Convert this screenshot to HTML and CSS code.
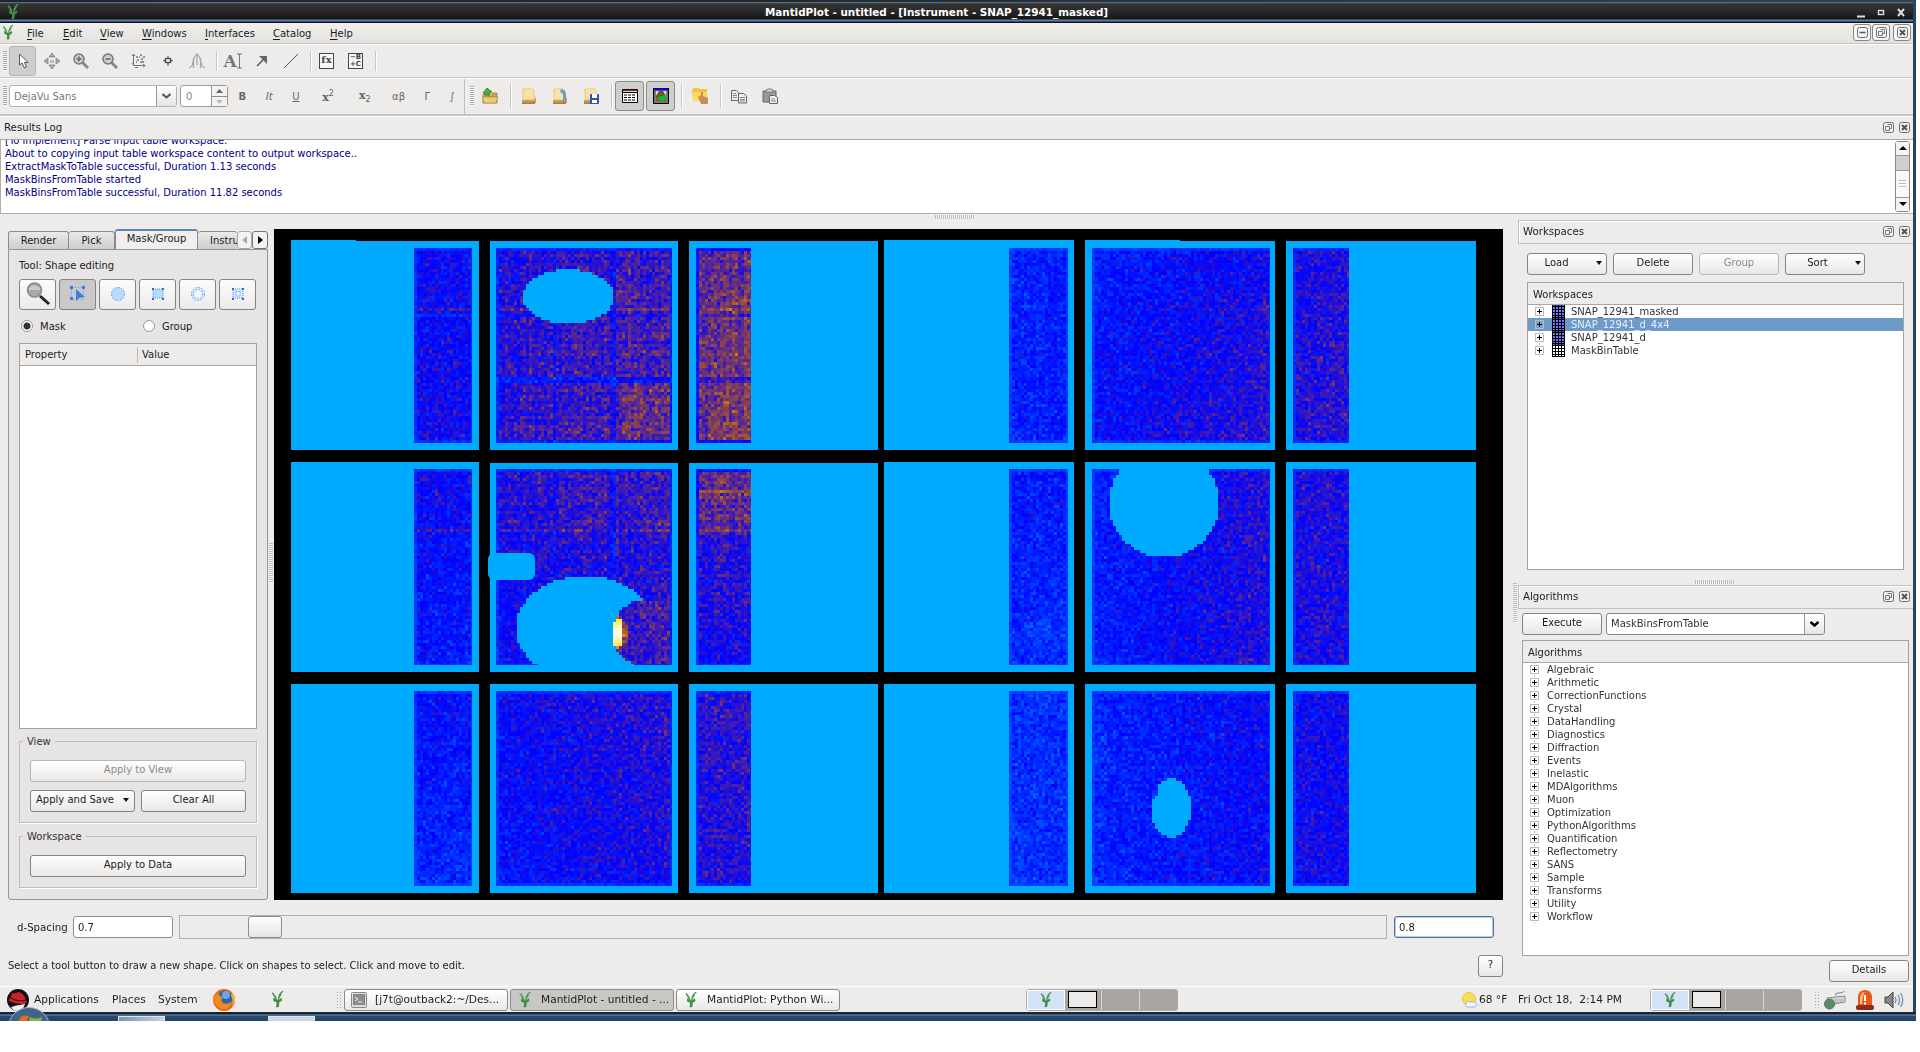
FILE: index.html
```html
<!DOCTYPE html>
<html lang="en">
<head>
<meta charset="utf-8">
<title>MantidPlot - untitled - [Instrument - SNAP_12941_masked]</title>
<link rel="stylesheet" href="styles.css">
</head>
<body>
<svg class="defs" width="0" height="0">
  <symbol id="mantid" viewBox="0 0 14 18"><path d="M1 2Q4 3 6 10M13 0Q8 3 8 10M3 4L5 8M11 3L8.500 7" fill="none" stroke="#4c9a55" stroke-width="1.600"/><path d="M2.500 7L6 9.500H8L11.500 7L12 10L9 12L8.500 17L5.500 17.500L6 12L2.500 10.500Z" fill="#3f8d4a"/></symbol>
  <symbol id="float" viewBox="0 0 11 11"><rect x=".5" y=".5" width="10" height="10" rx="2" fill="#f4f3f2" stroke="#6d6d6d"/><path d="M4.500 2.500h4v4h-2M2.500 4.500h4v4h-4z" fill="none" stroke="#777"/></symbol>
  <symbol id="close" viewBox="0 0 11 11"><rect x=".5" y=".5" width="10" height="10" rx="2" fill="#f4f3f2" stroke="#6d6d6d"/><path d="M3 3L8 8M8 3L3 8" stroke="#555" stroke-width="2"/></symbol>
  <symbol id="minus" viewBox="0 0 11 11"><rect x=".5" y=".5" width="10" height="10" rx="2" fill="#f4f3f2" stroke="#6d6d6d"/><path d="M2.500 5.500h6" stroke="#555" stroke-width="1.500"/></symbol>
  <symbol id="grid" viewBox="0 0 13 13"><rect width="13" height="13" fill="#000"/><path d="M1 2h2v2h-2zM4 2h2v2h-2zM7 2h2v2h-2zM10 2h2v2h-2zM1 5h2v2h-2zM4 5h2v2h-2zM7 5h2v2h-2zM10 5h2v2h-2zM1 8h2v2h-2zM4 8h2v2h-2zM7 8h2v2h-2zM10 8h2v2h-2zM1 11h2v1h-2zM4 11h2v1h-2zM7 11h2v1h-2zM10 11h2v1h-2z" fill="currentColor"/><path d="M1 .500h2M4 .500h2M7 .500h2M10 .500h2" stroke="#3b5c9a"/></symbol>
  <symbol id="book" viewBox="0 0 16 16"><path d="M1 1Q8 -1 13 1L15 13L13 15H2Z" fill="#f3d08d"/><path d="M3 2Q8 0 12 2V11H3Z" fill="#fae0aa"/><path d="M1 12H13L15 9V15H1Z" fill="#d29c4d"/><path d="M1 15.200H14" stroke="#7b5424"/></symbol>
</svg>
<div class="desktop">
<div class="window">
  <header class="titlebar"><svg class="tb-logo"><use href="#mantid"/></svg><span>MantidPlot - untitled - [Instrument - SNAP_12941_masked]</span>
    <svg class="wm" viewBox="0 0 50 12"><path d="M1 9.500h8" stroke="#ddd" stroke-width="2"/><rect x="22.500" y="3.500" width="5" height="4" fill="none" stroke="#ddd" stroke-width="1.400"/><path d="M42 2L48 9M48 2L42 9" stroke="#ddd" stroke-width="2"/></svg></header>
  <nav class="menubar"><svg class="mb-logo"><use href="#mantid"/></svg>
    <span class="m1"><u>F</u>ile</span><span class="m2"><u>E</u>dit</span><span class="m3"><u>V</u>iew</span><span class="m4"><u>W</u>indows</span><span class="m5"><u>I</u>nterfaces</span><span class="m6"><u>C</u>atalog</span><span class="m7"><u>H</u>elp</span>
    <div class="mdi"><i><svg><use href="#minus"/></svg></i><i><svg><use href="#float"/></svg></i><i class="last"><svg><use href="#close"/></svg></i></div>
  </nav>
  <div class="toolbar one">
    <b class="grip"></b>
    <button class="tool on"><svg viewBox="0 0 16 16"><path d="M4.500 1V12L7 10L9.500 15L11.500 14L9.500 9.500H13Z" fill="#fff" stroke="#555"/></svg></button>
    <button class="tool"><svg viewBox="0 0 16 16"><path d="M8 0L11 4H5ZM8 16L11 12H5ZM0 8L4 5V11ZM16 8L12 5V11Z" fill="#aaa" stroke="#777" stroke-width=".7"/><path d="M6 7h4v3h-4z" fill="#bbb"/></svg></button>
    <button class="tool"><svg viewBox="0 0 16 16"><path d="M9 9L15 15" stroke="#888" stroke-width="3"/><circle cx="6" cy="6" r="5" fill="#ccc" stroke="#777" stroke-width="1.500"/><path d="M3.500 6h5M6 3.500v5" stroke="#666" stroke-width="1.500"/></svg></button>
    <button class="tool"><svg viewBox="0 0 16 16"><path d="M9 9L15 15" stroke="#888" stroke-width="3"/><circle cx="6" cy="6" r="5" fill="#ccc" stroke="#777" stroke-width="1.500"/><path d="M3.500 6h5" stroke="#666" stroke-width="1.500"/></svg></button>
    <button class="tool"><svg viewBox="0 0 16 16"><path d="M2.500 2v10.500H14M1 3l1.500-2L4 3M1 10l1.500 2M12 11l2 1.500-2 2M4 14.500h3" fill="none" stroke="#777"/><path d="M5 4h2M9 2h2M12 4h2M6 7h2M10 6h2M5 9h1M9 9h4M8 4h1" stroke="#777" stroke-width="1.500"/></svg></button>
    <button class="tool"><svg viewBox="0 0 16 16"><path d="M8 3v3M8 10v3M3 7.500h2M11 7.500h2" stroke="#444"/><rect x="5.500" y="5.500" width="5" height="4" fill="none" stroke="#444" stroke-width="1.300"/></svg></button>
    <button class="tool"><svg viewBox="0 0 16 16"><path d="M0 15L3 13L5 5L6 3M16 15L13 13L11 5L10 3M8 0v12" fill="none" stroke="#999"/><path d="M4.500 5V15M11.500 5V15M6 2.500h4" stroke="#aaa" stroke-width="1.300"/></svg></button>
    <s class="sep"></s>
    <button class="tool text-tool">A<svg class="ibeam" viewBox="0 0 5 16"><path d="M0 1h5M0 15h5M2.500 1v14" stroke="#777"/></svg></button>
    <button class="tool"><svg viewBox="0 0 16 16"><path d="M3 13L10 6" stroke="#555" stroke-width="1.500"/><path d="M5 3H13V11Z" fill="#666"/></svg></button>
    <button class="tool"><svg viewBox="0 0 16 16"><path d="M1 15L15 1" stroke="#555"/></svg></button>
    <s class="sep"></s>
    <button class="tool"><span class="fx">fx</span></button>
    <button class="tool"><span class="bc">−B<br>+C</span></button>
    <s class="sep"></s>
  </div>
  <div class="toolbar two">
    <b class="grip"></b>
    <div class="combo font dim"><span>DejaVu Sans</span><i><svg viewBox="0 0 9 6"><path d="M.5 1L4.500 4.500L8.500 1" fill="none" stroke="#555" stroke-width="2"/></svg></i></div>
    <div class="spin"><span>0</span><i><svg viewBox="0 0 15 20"><path d="M4 7L7.500 3L11 7Z" fill="#666"/><path d="M0 10.500h15" stroke="#8a8a8a"/><path d="M4 14L7.500 18L11 14Z" fill="#bbb"/></svg></i></div>
    <div class="formats"><span class="f1">B</span><span class="f2">It</span><span class="f3">U</span><span class="f4">x<sup>2</sup></span><span class="f5">x<sub>2</sub></span><span class="f6">αβ</span><span class="f7">Γ</span><span class="f8">∫</span></div>
    <b class="grip second"></b>
    <button class="act"><svg viewBox="0 0 16 16"><path d="M1 15V6H6L7 8H10V5H15V15Z" fill="#cda850" stroke="#866b2c" stroke-width=".6"/><path d="M0 9H16L14 15H2Z" fill="#eacd78" stroke="#9b7a35" stroke-width=".6"/><path d="M5 0L10 4H8V7H3V5H1Z" fill="#55a936" stroke="#2f6d1a" stroke-width=".7"/></svg></button>
    <s class="sep"></s>
    <button class="act"><svg><use href="#book"/></svg></button>
    <button class="act"><svg viewBox="0 0 16 16"><use href="#book" width="16" height="16"/><path d="M9 1Q14 2 14 6V14H11V7Q11 5 8 4Z" fill="#6e9ccc"/></svg></button>
    <button class="act"><svg viewBox="0 0 16 16"><use href="#book" width="16" height="16"/><rect x="7" y="6" width="9" height="10" rx="1" fill="#265aa8"/><path d="M9 6h5v4h-5zM9 12h5v3h-5z" fill="#fff"/></svg></button>
    <s class="sep"></s>
    <button class="act on"><svg viewBox="0 0 16 16"><path d="M.5 1.500h15v13H.5z" fill="#fff" stroke="#000"/><path d="M1 2.500h14" stroke="#7a3535" stroke-width="1.500"/><path d="M0 4.500h16" stroke="#000"/><path d="M2 7h12M2 9.500h12M2 12h12" stroke="#000" stroke-dasharray="3 1"/></svg></button>
    <button class="act on"><svg viewBox="0 0 16 16"><rect x=".5" y=".5" width="15" height="15" fill="#777" stroke="#000"/><path d="M1 1.500h14" stroke="#20f" stroke-width="2"/><path d="M3 3h10v4h-10z" fill="#ddd"/><path d="M3 8L6 3H10L13 8V13H3Z" fill="#6b5b18"/><path d="M3 11L8 8L13 7V12L9 13Z" fill="#1b3"/><path d="M3 12h4M11 13h2" stroke="#e22"/></svg></button>
    <s class="sep"></s>
    <button class="act"><svg viewBox="0 0 16 16"><path d="M0 2L2 0H6L8 1H15V12H1Z" fill="#f1c337"/><path d="M1 4H15L14 13H1Z" fill="#fadb63"/><path d="M6 9L9 7V4H11V8L16 10V16H9Z" fill="#c98e59"/></svg></button>
    <s class="sep"></s>
    <button class="act"><svg viewBox="0 0 16 16"><path d="M.500 2.500h5l2 2v8h-7zM7.500 5.500h5l3 2.500v7h-8z" fill="#eee" stroke="#666"/><path d="M2 5.500h3M2 7.500h4M2 9.500h4M9 9.500h5M9 11.500h5M9 13h5" stroke="#888"/></svg></button>
    <button class="act"><svg viewBox="0 0 16 16"><path d="M1 3H14V14H1Z" fill="#999" stroke="#666"/><path d="M4 4V2L6 1H9L11 2V4Z" fill="#ddd" stroke="#777"/><path d="M7.500 7.500h5l3 2v6h-8z" fill="#eee" stroke="#666"/><path d="M9 11h4M9 13h5" stroke="#888"/></svg></button>
  </div>
  <div class="dock-title results"><span>Results Log</span><svg><use href="#float"/></svg><svg><use href="#close"/></svg></div>
  <div class="log"><div class="log-text"><p>[To implement] Parse input table workspace.</p><p>About to copying input table workspace content to output workspace..</p><p>ExtractMaskToTable successful, Duration 1.13 seconds</p><p>MaskBinsFromTable started</p><p>MaskBinsFromTable successful, Duration 11.82 seconds</p></div>
    <div class="scroll"><i class="up"></i><b></b><em></em><i class="down"></i></div></div>
  <div class="main">
    <section class="instrument">
      <div class="hgrip"></div>
      <div class="view">
        <aside class="tabs">
          <div class="tabrow"><span class="t1">Render</span><span class="t2">Pick</span><span class="t3 cur">Mask/Group</span><span class="t4">Instru</span><i></i><i class="next"></i></div>
          <div class="pane">
            <p class="toolname">Tool: Shape editing</p>
            <div class="shapes">
              <button><svg class="big" viewBox="0 0 24 24"><path d="M14 14L23 22" stroke="#222" stroke-width="3"/><circle cx="8.500" cy="8" r="7" fill="#aaa" stroke="#888" stroke-width="1.500"/><path d="M3 6Q8 1 14 6V8H3Z" fill="#ccc"/></svg></button>
              <button class="on"><svg viewBox="0 0 16 16"><path d="M1.500 1.500h12v12h-12z" fill="none" stroke="#4b8fff" stroke-dasharray="1 2"/><path d="M0 0h3v3h-3zM12 0h3v3h-3zM0 11h3v3h-3z" fill="#3a78e8"/><path d="M6 3V15L9 12L15 11Z" fill="#3c7fdb"/></svg></button>
              <button><svg viewBox="0 0 16 16"><circle cx="8" cy="8" r="6.500" fill="#b5dcff" stroke="#4b8fff" stroke-dasharray="1.500 1.500"/></svg></button>
              <button><svg viewBox="0 0 16 16"><rect x="3" y="3" width="10" height="9" fill="#b5dcff" stroke="#4b8fff" stroke-dasharray="1 1"/><path d="M2 2h2v2h-2zM12 2h2v2h-2zM2 12h2v2h-2zM12 12h2v2h-2z" fill="#36c"/></svg></button>
              <button><svg viewBox="0 0 16 16"><circle cx="8" cy="8" r="6.500" fill="#d9ecff" stroke="#4b8fff" stroke-dasharray="1.500 1.500"/><circle cx="8" cy="8" r="4.500" fill="#f6f6f6" stroke="#4b8fff" stroke-dasharray="1.500 1.500"/></svg></button>
              <button><svg viewBox="0 0 16 16"><rect x="3" y="3" width="10" height="9" fill="#d5eaff" stroke="#4b8fff" stroke-dasharray="1 1"/><rect x="6" y="5.500" width="4" height="4.500" fill="#f6f6f6" stroke="#4b8fff" stroke-dasharray="1 1"/><path d="M2 2h2v2h-2zM12 2h2v2h-2zM2 12h2v2h-2zM12 12h2v2h-2z" fill="#36c"/></svg></button>
            </div>
            <div class="radios"><label><i class="dot"></i>Mask</label><label><i></i>Group</label></div>
            <div class="props"><div class="head"><span>Property</span><span>Value</span></div></div>
            <fieldset class="fs-view"><legend>View</legend><button class="btn off">Apply to View</button><div class="pair"><button class="btn">Apply and Save<i class="caret"></i></button><button class="btn">Clear All</button></div></fieldset>
            <fieldset class="fs-ws"><legend>Workspace</legend><button class="btn">Apply to Data</button></fieldset>
          </div>
        </aside>
        <div class="vgrip"></div>
        <canvas id="detector" width="1229" height="671"></canvas>
      </div>
      <div class="range"><label>d-Spacing</label><div class="field">0.7</div><div class="slider"><i></i></div><div class="field focus">0.8</div></div>
      <div class="hint"><span>Select a tool button to draw a new shape. Click on shapes to select. Click and move to edit.</span><button class="btn">?</button></div>
    </section>
    <div class="vgrip right"></div>
    <section class="docks">
      <div class="dock-title boxed"><span>Workspaces</span><svg><use href="#float"/></svg><svg><use href="#close"/></svg></div>
      <div class="ws-buttons"><button class="btn">Load<i class="caret"></i></button><button class="btn">Delete</button><button class="btn off">Group</button><button class="btn">Sort<i class="caret"></i></button></div>
      <div class="tree ws"><div class="head">Workspaces</div>
        <ul><li><b></b><svg><use href="#grid"/></svg>SNAP_12941_masked</li><li class="sel"><b></b><svg><use href="#grid"/></svg>SNAP_12941_d_4x4</li><li><b></b><svg><use href="#grid"/></svg>SNAP_12941_d</li><li><b></b><svg class="white"><use href="#grid"/></svg>MaskBinTable</li></ul></div>
      <div class="hgrip dockgrip"></div>
      <div class="dock-title boxed"><span>Algorithms</span><svg><use href="#float"/></svg><svg><use href="#close"/></svg></div>
      <div class="alg-run"><button class="btn">Execute</button><div class="combo alg"><span>MaskBinsFromTable</span><i><svg viewBox="0 0 9 6"><path d="M.5 1L4.500 4.500L8.500 1" fill="none" stroke="#000" stroke-width="2.500"/></svg></i></div></div>
      <div class="tree algs"><div class="head">Algorithms</div>
        <ul><li><b></b>Algebraic</li><li><b></b>Arithmetic</li><li><b></b>CorrectionFunctions</li><li><b></b>Crystal</li><li><b></b>DataHandling</li><li><b></b>Diagnostics</li><li><b></b>Diffraction</li><li><b></b>Events</li><li><b></b>Inelastic</li><li><b></b>MDAlgorithms</li><li><b></b>Muon</li><li><b></b>Optimization</li><li><b></b>PythonAlgorithms</li><li><b></b>Quantification</li><li><b></b>Reflectometry</li><li><b></b>SANS</li><li><b></b>Sample</li><li><b></b>Transforms</li><li><b></b>Utility</li><li><b></b>Workflow</li></ul></div>
      <div class="details"><button class="btn">Details</button></div>
    </section>
  </div>
  <footer class="panel">
    <svg class="hat" viewBox="0 0 22 22"><circle cx="11" cy="11" r="11" fill="#111"/><path d="M4 18Q11 16 18 15Q16 22 11 22Q6 22 4 18Z" fill="#eee"/><path d="M1 11Q4 10 5 4Q9 5 11 3Q16 3 19 11Q21 15 16 15Q6 15 1 11Z" fill="#c8232c"/><path d="M4 9Q10 13 19 11" stroke="#111" fill="none"/></svg>
    <span class="apps">Applications</span><span class="places">Places</span><span class="system">System</span>
    <svg class="fox" viewBox="0 0 24 24"><circle cx="12" cy="12" r="11" fill="#e66a17"/><circle cx="13" cy="10" r="7.500" fill="#2a63b5"/><circle cx="14" cy="7" r="4" fill="#6ba7dd"/><path d="M1 8Q4 8 6 5Q8 9 11 9Q8 12 11 15Q15 17 20 14Q17 22 10 21Q2 19 1 8Z" fill="#ef8b20"/><path d="M20 4Q26 12 20 19Q22 12 19 8Z" fill="#f5b433"/></svg>
    <svg class="mant"><use href="#mantid"/></svg>
    <b class="dots"></b>
    <div class="task"><svg viewBox="0 0 16 16"><rect x=".5" y=".5" width="15" height="15" rx="1" fill="#ddd" stroke="#888"/><rect x="2.500" y="2.500" width="11" height="10" fill="#8a8f8c" stroke="#888"/><path d="M4 5L7 7L4 9M7 10h4" stroke="#eee" fill="none"/></svg><span>[j7t@outback2:~/Des...</span></div>
    <div class="task on"><svg><use href="#mantid"/></svg><span>MantidPlot - untitled - ...</span></div>
    <div class="task"><svg><use href="#mantid"/></svg><span>MantidPlot: Python Wi...</span></div>
    <div class="pager p1"><i class="cur"><svg><use href="#mantid"/></svg></i><i><b></b></i><i></i><i></i></div>
    <svg class="sun" viewBox="0 0 16 16"><circle cx="7" cy="7" r="6.500" fill="#f4df5a" stroke="#e3c53a"/><path d="M5 15Q2 14 4 11Q6 8 9 10Q14 9 15 13Q14 15 12 15Z" fill="#eef3fa" stroke="#8fa9c9" stroke-width=".8"/></svg>
    <span class="temp">68 °F</span><span class="clock">Fri Oct 18,&nbsp; 2:14 PM</span>
    <div class="pager p2"><i class="cur"><svg><use href="#mantid"/></svg></i><i><b></b></i><i></i><i></i></div>
    <b class="dots"></b>
    <svg class="tray kb" viewBox="0 0 22 20"><path d="M3 8L21 6V12L4 15Z" fill="#d5d6d2" stroke="#888"/><path d="M5 10h14M6 12h12" stroke="#999" stroke-dasharray="1.500 1"/><path d="M12 6Q10 3 15 3T20 1" fill="none" stroke="#6688a8"/><circle cx="5.500" cy="14" r="5" fill="#5a8f5c" stroke="#4a6f8c"/></svg>
    <svg class="tray" viewBox="0 0 20 22"><path d="M3 17V7Q4 1 10 1T17 7V17Z" fill="#e85a1a"/><path d="M5 8Q6 3 10 3Q8 5 7 15H5Z" fill="#ffb07a"/><rect x="1" y="16" width="18" height="5" rx="2" fill="#8c2c12"/><path d="M10 6v6M10 13.500v2" stroke="#fff" stroke-width="2"/></svg>
    <svg class="tray" viewBox="0 0 20 20"><path d="M1 7H4L9 2V18L4 13H1Z" fill="#888" stroke="#444"/><path d="M11 7Q13 10 11 13M14 5Q17 10 14 15M16.500 3Q21 10 16.500 17" fill="none" stroke="#6d86ae" stroke-width="1.200"/></svg>
  </footer>
</div>
<div class="host"><svg class="orb" viewBox="0 0 42 14"><ellipse cx="21" cy="22" rx="21" ry="21.500" fill="#3f6486" stroke="#9db7cf"/><path d="M11 14Q12 7 21 9L19 14Z" fill="#e56a28"/><path d="M22 10Q28 13 34 10L33 14H21Z" fill="#86b83f"/></svg><i class="h1"></i><i class="h2"></i></div>
</div>
<script src="detector.js"></script>
</body>
</html>
```
FILE: styles.css
```css
*{box-sizing:border-box}
body{margin:0;background:#fff;font:10px/13px "DejaVu Sans",sans-serif;color:#1c1c1c}
p,ul{margin:0;padding:0;list-style:none}
button{font:inherit;color:inherit;padding:0;border:0;background:none}
svg{display:block;flex:none}
.defs{position:absolute}
.desktop{width:1916px;height:1021px;background:linear-gradient(90deg,#182838,#1d2c3a 40%,#29445f 100%);padding-top:2px;overflow:hidden}
.window{width:1913px;height:1010px;background:#edecea;display:flex;flex-direction:column;overflow:hidden}
.titlebar{height:21px;background:linear-gradient(#777 0,#333 2px,#2c2c2c 8px,#161616 17px,#5c80a8 18px,#5c80a8 19px,#0d1320 20px);color:#fff;font-weight:bold;display:grid;grid-template-columns:20px 1fr 60px;text-align:center;line-height:21px;font-size:10.4px}
.tb-logo{width:12px;height:16px;margin:2px 0 0 7px}
.wm{width:50px;height:12px;margin:5px 0 0 3px}
.menubar{height:21px;border-bottom:1px solid #c7c5c2;background:linear-gradient(#efefed,#e3e2df);display:flex;align-items:center;padding-left:2px}
.menubar span{padding-top:2px}
.menubar u{text-underline-offset:2px}
.mb-logo{width:12px;height:15px;margin-right:13px}
.m1{width:36px}.m2{width:37px}.m3{width:42px}.m4{width:63px}.m5{width:68px}.m6{width:57px}.m7{flex:1}
.mdi{display:flex;gap:1px;margin-right:2px}
.mdi i{width:18px;height:17px;border:1px solid #888;border-radius:3px;background:#f6f5f4;display:grid;place-items:center}
.mdi .last{margin-left:2px}
.mdi svg{width:11px;height:11px}
.toolbar{display:flex;align-items:center;border-top:1px solid #fff;border-bottom:1px solid #c7c5c2}
.one{height:34px;gap:2px;padding-left:3px}
.two{height:38px;padding-left:3px;border-bottom-width:2px}
.grip{width:4px;height:20px;background:repeating-linear-gradient(#aaa 0 1px,#f8f8f8 1px 2px)}
.one .tool{width:27px;height:30px;display:grid;place-items:center}
.tool svg{width:16px;height:16px}
.tool.on,.act.on{background:#cfcecc;border:1px solid #8c8c8a;border-radius:3px}
.one .tool.on{border-color:#b8b6b4}
.one .sep{width:5px}
.sep{width:8px;height:20px;border:0;display:flex;justify-content:flex-end}
.sep::after{content:"";width:1px;height:20px;background:#c9c7c4;box-shadow:1px 0 #fff}
.two .sep::after{height:24px;margin-right:2px}
.two .sep{height:24px}
.tool.text-tool{display:flex;align-items:center;justify-content:center;font:bold 17px "DejaVu Serif",serif;color:#777}
.one .text-tool .ibeam{width:5px}
.fx,.bc{border:1px solid #444;width:15px;height:16px;font:bold 10px/12px "DejaVu Serif",serif;color:#444;text-align:center;background:#f8f8f8}
.bc{font:bold 7px/7px "DejaVu Sans",sans-serif}
.combo{height:22px;border:1px solid #888;border-radius:3px;background:#fff;display:flex;align-items:center}
.combo span{flex:1;padding-left:4px}
.combo i{width:20px;height:20px;border-left:1px solid #999;background:linear-gradient(#fff,#e6e5e3);display:grid;place-items:center;border-radius:0 3px 3px 0}
.combo svg{width:9px;height:6px}
.font{width:168px;margin:0 3px 0 2px;color:#777;border-color:#b5b3b0}
.spin{width:48px;height:22px;border:1px solid #999;border-radius:3px;background:#fff;display:flex;align-items:center;color:#888}
.spin span{flex:1;padding-left:5px}
.spin i{width:16px;height:20px;border-left:1px solid #999;background:#f3f2f1}
.spin svg{width:15px;height:20px}
.formats{width:237px;height:35px;border-right:1px solid #c2c0bd;display:flex;align-items:center;color:#666;padding-left:1px}
.formats span{text-align:center;width:27px}
.f1{font-weight:bold}.f2{font-style:italic}.f3{text-decoration:underline}
.formats .f4{width:38px;font:bold 11px "DejaVu Serif",serif}.formats .f5{width:36px;font:bold 11px "DejaVu Serif",serif}
.formats .f6{width:32px}.formats .f7{width:26px}.formats .f8{width:24px}
.formats sup,.formats sub{font:8px "DejaVu Sans",sans-serif}
.second{margin-left:5px}
.act{width:31px;height:30px;display:grid;place-items:center}
.act svg{width:16px;height:16px}
.act.on{width:29px;margin:0 1px}
.dock-title{display:flex;align-items:center;gap:5px;padding:0 3px 0 4px;font-size:10.2px}
.dock-title span{flex:1}
.dock-title svg{width:11px;height:11px}
.results{height:24px;border-bottom:1px solid #aaa8a5;border-top:1px solid #fff;padding-bottom:1px}
.log{height:74px;border:1px solid #b0aeab;border-width:0 0 1px 1px;background:#fff;display:flex}
.log-text{flex:1;color:#00007f;padding-left:4px;overflow:hidden;display:flex;flex-direction:column;justify-content:flex-end;padding-bottom:14px;letter-spacing:-.02px}
.log-text p{height:13px;flex:none}
.scroll{width:15px;height:71px;margin:1px 3px 0 0;border:1px solid #888;border-radius:3px;display:flex;flex-direction:column;background:#d0cfcd}
.scroll i{height:13px;background:#f5f4f3;display:grid;place-items:center}
.scroll i::after{content:"";border:4px solid transparent;border-top:0;border-bottom:4px solid #000}
.scroll .down::after{border-bottom:0;border-top:4px solid #000}
.scroll b{height:16px;border:1px solid #999;border-width:1px 0}
.scroll em{flex:1;background:repeating-linear-gradient(#bbb 0 1px,#fafafa 1px 3px) center/7px 8px no-repeat #f8f8f7;border-bottom:1px solid #999}
.main{display:flex;height:773px}
.instrument{width:1506px;flex:none;display:flex;flex-direction:column}
.hgrip{width:40px;height:4px;margin:1px 0 10px 935px;background:repeating-linear-gradient(90deg,#bbb 0 1px,#f5f5f5 1px 2px)}
.view{display:flex;height:671px;padding-left:8px}
.tabs{width:260px;padding-top:1px}
.tabrow{display:flex;height:19px;align-items:flex-end}
.tabrow span{height:18px;border:1px solid #8b8b89;border-bottom:0;border-radius:3px 3px 0 0;background:linear-gradient(#eceae8,#cfcdcb);text-align:center;line-height:17px}
.tabrow .t1{width:61px}.tabrow .t2{width:46px;border-left:0}.tabrow .t3{width:83px}.tabrow .t4{width:39px;text-align:left;padding-left:12px;border-left:0;overflow:hidden;border-right:0}
.tabrow .cur{height:20px;background:#f0efee;border-top:2px solid #5c85b8;line-height:16px}
.tabrow i{width:15px;height:18px;border:1px solid #aaa;border-radius:3px;background:#f4f3f2;display:grid;place-items:center}
.tabrow i::after{content:"";border:4.5px solid transparent;border-left-width:0;border-right:5px solid #aaa}
.tabrow .next{border-color:#777;width:16px}
.tabrow .next::after{border-right-width:0;border-left:5px solid #000}
.pane{height:651px;border:1px solid #979593;border-radius:0 0 3px 3px;background:#e6e4e5;padding:9px 10px 0}
.shapes{display:flex;gap:3px;margin-top:7px}
.shapes button{width:37px;height:31px;border:1px solid #858381;border-radius:3px;background:linear-gradient(#fcfcfc,#ebeae9);display:grid;place-items:center}
.shapes .on{background:#cbc9c8}
.shapes svg{width:16px;height:16px}.shapes .big{width:24px;height:24px}
.radios{display:flex;height:33px;align-items:center}
.radios label{width:122px;display:flex;align-items:center;gap:7px;padding-left:2px}
.radios label+label{padding-left:5px}
.radios i{width:12px;height:12px;border:1px solid #999;border-radius:50%;background:#fff}
.radios .dot{background:radial-gradient(#333 0 3px,#fff 4px)}
.props{height:386px;border:1px solid #a3a19f;background:#fff}
.head{height:22px;background:#edecea;border-bottom:1px solid #a9a7a5;line-height:22px;padding-left:5px}
.props .head{display:grid;grid-template-columns:112px 1fr}
.props .head span+span{background:linear-gradient(#bbb,#bbb) 0 3px/1px 16px no-repeat;padding-left:5px}
fieldset{margin:0;border:1px solid #bebcba;box-shadow:1px 1px #fff;padding:0 10px;min-width:0;width:238px}
legend{padding:0 4px;margin-left:-7px;height:13px;color:#333}
.fs-view{height:88px;margin-top:6px}
.fs-view>.btn{margin-top:12px}
.btn{height:22px;border:1px solid #858381;border-radius:3px;background:linear-gradient(#fefefe,#e9e8e6);display:flex;align-items:center;justify-content:center;line-height:18px;padding-bottom:1px}
fieldset .btn{width:216px}
.off{color:#8d8b89;border-color:#b9b7b5}
.pair{display:flex;gap:6px;margin-top:8px}
.pair .btn{width:105px}
.caret{border:3.5px solid transparent;border-top:4px solid #111;border-bottom:0;margin-left:9px}
.fs-ws{height:58px;margin-top:7px}
.fs-ws .btn{margin-top:12px}
.vgrip{width:4px;height:40px;flex:none;margin:314px 1px 0;background:repeating-linear-gradient(#bbb 0 1px,#f5f5f5 1px 2px)}
canvas{display:block;width:1229px;height:671px}
.range{display:flex;align-items:center;height:25px;margin-top:15px;padding-left:17px}
.range>*{flex:none}
.range label{width:56px;font-size:10.2px}
.field{width:100px;height:22px;border:1px solid #8f8d8b;border-radius:3px;background:#fff;padding-left:4px;line-height:21px}
.focus{border-color:#4b73a8;box-shadow:inset 0 0 0 1px #b7cbe3}
.slider{width:1208px;height:24px;border:1px solid #b2b0ae;margin:0 7px 0 6px;padding-left:68px}
.slider i{display:block;width:34px;height:22px;border:1px solid #8f8d8b;border-radius:3px;background:linear-gradient(#fefefe,#e6e5e3)}
.hint{display:flex;justify-content:space-between;align-items:center;height:22px;margin-top:15px;padding:0 3px 0 8px;letter-spacing:-.02px}
.hint .btn{width:25px}
.right{margin:369px 1px 0 7px}
.docks{width:395px;display:flex;flex-direction:column;padding-top:6px}
.boxed{height:24px;border:1px solid #c3c1bf;border-right:0;box-shadow:inset 1px 1px #fff;flex:none}
.ws-buttons{display:flex;gap:6px;margin:9px 0 7px 9px}
.ws-buttons .btn{width:80px}
.ws-buttons .btn .caret{margin:0 -12px 0 27px}
.ws-buttons .btn:last-child .caret{margin-right:-18px}
.tree{border:1px solid #a5a3a1;background:#fff;color:#333;margin-left:9px;flex:none}
.tree .head{color:#1c1c1c;box-shadow:none;line-height:23px}
.tree.ws{width:377px;height:288px}
.tree li{display:flex;align-items:center;height:13px;padding-left:7px;background:repeating-linear-gradient(#bbb 0 1px,transparent 1px 2px) 11px 0/1px 13px no-repeat}
.tree li b{width:9px;height:9px;border:1px solid #bbb;background:linear-gradient(#000,#000) center/5px 1px no-repeat,linear-gradient(#000,#000) center/1px 5px no-repeat,#fff;margin-right:8px}
.tree li svg{width:13px;height:13px;margin-right:6px;color:#7773ff}
.tree li .white{color:#fff}
.tree .sel{background:#6e9aca;color:#e6eef8}
.tree .sel b{background-color:#7f9fd0}
.dockgrip{margin:10px 0 1px 177px}
.alg-run{display:flex;gap:4px;margin:4px 0 5px 4px}
.alg-run .btn{width:80px}.alg{width:219px;color:#333}
.tree.algs{margin-left:4px;width:387px;height:316px}
.details{display:flex;justify-content:flex-end;padding:4px 4px 0 0}
.details .btn{width:80px}
.panel{height:26px;border-top:1px solid #fff;display:flex;align-items:center;font-size:10.6px;white-space:nowrap}
.hat{width:22px;height:22px;margin:0 5px 0 7px}
.apps{width:78px}.places{width:46px}.system{width:53px}
.fox{width:24px;height:24px;margin-left:1px}
.mant{width:13px;height:17px;margin-left:35px}
.dots{width:5px;height:18px;background:radial-gradient(circle,#aaa 0 .7px,transparent 1px) 0 0/3px 3px;margin-left:52px}
.task{width:164px;height:22px;border:1px solid #8d8b89;border-radius:3px;background:linear-gradient(#fff,#e9e8e6);display:flex;align-items:center;margin-left:2px;padding-left:6px}
.dots+.task{margin-left:3px}
.task svg{width:16px;height:16px;margin-right:8px}
.task.on{background:#c9c7c4}
.pager{width:152px;height:22px;border:1px solid #aaa;border-radius:3px;background:#a9a5a2;display:grid;grid-template-columns:repeat(4,1fr)}
.pager i{border-right:1px solid #d9d7d4;display:flex;justify-content:center}
.pager i:last-child{border:0}
.pager .cur{background:#d2e2f7;border:1px solid #fff;align-items:center}
.pager svg{width:12px;height:16px}
.pager b{width:29px;height:17px;border:1px solid #000;background:#edecea;margin-top:1px}
.p1{margin-left:186px}
.sun{width:16px;height:16px;margin-left:284px}
.temp{width:40px;padding-left:1px}
.clock{width:132px}
.p2+.dots{margin-left:12px}
.tray{width:20px;height:22px;margin-left:9px}
.kb{width:22px;margin-left:5px}
.host{height:9px;background:linear-gradient(#17283c 0 1px,#0e2038 2px,#7992ac 3px,#274a70 4px,#1f456d);display:flex;position:relative;width:1916px}
.orb{position:absolute;left:8px;top:-5px;width:42px;height:14px}
.host i{position:absolute;top:4px;height:5px;width:47px;background:linear-gradient(90deg,#7c95b1,#c3d0df);border:1px solid #dde6f0;border-bottom:0}
.h1{left:118px}.host .h2{left:268px;background:#cbd6e3}
```
FILE: detector.js
```js
// Draws the unwrapped detector banks: flat masked borders with noisy 4x4-binned counts inside.
const ctx = document.getElementById('detector').getContext('2d');
const OX = 274, OY = 229;
let seed = 12941;
const rnd = () => {
  seed = (seed * 1664525 + 1013904223) >>> 0;
  return seed / 4294967296;
};
const stops = [[-1.6, 0, 170, 255], [-0.6, 0, 70, 255], [0, 0, 0, 255], [0.5, 75, 32, 165], [1, 150, 75, 60], [1.5, 215, 135, 0], [2.2, 255, 225, 20], [3, 255, 255, 255]];
function colour(v) {
  v = Math.max(-1.6, Math.min(3, v));
  let i = 1;
  while (stops[i][0] < v) i++;
  const a = stops[i - 1], b = stops[i], f = (v - a[0]) / (b[0] - a[0]);
  return 'rgb(' + [1, 2, 3].map(k => Math.round(a[k] + (b[k] - a[k]) * f)).join(',') + ')';
}
const cols = [[291, 479, 414, 472], [490, 678, 496, 672], [689, 878, 696, 751], [884, 1074, 1009, 1068], [1085, 1275, 1092, 1270], [1286, 1476, 1293, 1349]];
const rows = [[240, 450, 248, 443], [462, 672, 469, 665], [684, 893, 691, 886]];
// mean level at the left edge, at the right edge, and what is added towards the bottom
const level = [
  [[.02, -.02, .08], [.2, .42, .08], [.5, .66, .2], [-.28, -.2, 0], [-.26, .08, .22], [.12, .25, .05]],
  [[.06, -.02, -.1], [.22, .42, -.12], [.6, .66, -.3], [-.15, -.18, -.2], [-.22, .25, -.05], [.18, .18, -.05]],
  [[-.08, -.08, -.28], [0, .28, -.15], [.22, .32, -.08], [-.42, -.38, 0], [-.3, .02, 0], [.04, .07, 0]]
];
const inEllipse = (x, y, cx, cy, rx, ry) => ((x - cx) / rx) ** 2 + ((y - cy) / ry) ** 2 < 1;
function masked(x, y) {
  if (inEllipse(x, y, 568.5, 296.5, 46, 27)) return true;
  if (inEllipse(x, y, 585, 628, 69, 52) && !inEllipse(x, y, 648, 633, 36, 34)) return true;
  if (inEllipse(x, y, 1164, 503, 55, 54)) return true;
  return inEllipse(x, y, 1171, 808, 20.5, 29.5) && !inEllipse(x, y, 1151, 790, 7, 9);
}
ctx.fillStyle = '#000';
ctx.fillRect(0, 0, 1229, 671);
rows.forEach((r, ri) => cols.forEach((c, ci) => {
  ctx.fillStyle = '#00aaff';
  ctx.fillRect(c[0] - OX, r[0] - OY, c[1] - c[0], r[1] - r[0]);
  const [l, rt, bt] = level[ri][ci], W = c[3] - c[2], H = r[3] - r[2];
  const warm = ri < 2 && (ci === 1 || ci === 2);
  const colShift = [];
  for (let i = 0; i < 70; i++) colShift.push((rnd() - .5) * (warm ? .26 : .08));
  for (let y = 0; y < H; y += 3) {
    const rowShift = (rnd() - .5) * (warm ? .2 : .06);
    for (let x = 0; x < W; x += 3) {
      const px = c[2] + x, py = r[2] + y;
      if (masked(px + 1.5, py + 1.5)) continue;
      let v = l + (rt - l) * x / W + bt * y / H + colShift[x / 3 | 0] + rowShift;
      v += (rnd() + rnd() + rnd() - 1.5) * .42;
      if (ri === 0 && ci < 3) {
        if (py >= 306 && py < 309) v += .35;
        if (py >= 312 && py < 316) v -= .35;
        if (ci && py >= 375 && py < 382) v -= .4;
        if (ci === 1 && px > 620 && py > 380) v += .22 * Math.max(0, 1 - Math.hypot(px - 645, py - 400) / 50) + .08;
      }
      if (ri === 1 && ci < 3) {
        if (py >= 528 && py < 531) v += .28;
        if (py >= 532) v -= ci === 2 ? .28 : .1;
        if (ci === 2 && py >= 490 && py < 493) v += .35;
        if (ci === 1 && px > 610 && py > 600) {
          v += .22;
          const dy = Math.abs(py + 1.5 - 633);
          if (px < 620 && dy < 13) v = 3 - dy / 22;
          else v += Math.max(0, 1.5 - (px - 618) / 9 - dy / 16);
        }
      }
      if (ci === 1 && ri < 2 && ((px > 550 && px < 555) || (px > 609 && px < 614 && py < 600))) v -= .3;
      if (ri === 1 && ci === 3 && inEllipse(px, py, 1040, 630, 14, 12)) v -= .2;
      if (x < 3 || (x > W - 4 && ci !== 2 && ci !== 5) || y < 3 || y > H - 4) v = v * .4 - .4;
      ctx.fillStyle = colour(v);
      ctx.fillRect(px - OX, py - OY, Math.min(3, W - x), Math.min(3, H - y));
    }
  }
}));
// rounded mask shape reaching past the bank edge
ctx.fillStyle = '#00aaff';
ctx.beginPath();
ctx.roundRect(488 - OX, 553 - OY, 47, 27, 6);
ctx.fill();
// slight tilt of the banks along the outer edges
ctx.fillStyle = '#000';
[[356, 240, 123], [490, 240, 188], [689, 240, 189], [1119 + 61, 240, 95], [1286, 240, 190], [490, 462, 188], [689, 462, 189]].forEach(t => ctx.fillRect(t[0] - OX, t[1] - OY, t[2], 1));
```
